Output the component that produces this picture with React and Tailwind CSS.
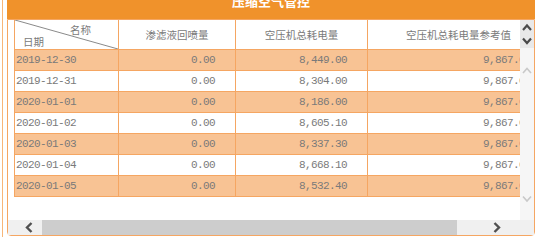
import React from 'react';

const rows = [
    ['2019-12-30', '0.00', '8,449.00', '9,867.00'],
    ['2019-12-31', '0.00', '8,304.00', '9,867.00'],
    ['2020-01-01', '0.00', '8,186.00', '9,867.00'],
    ['2020-01-02', '0.00', '8,605.10', '9,867.00'],
    ['2020-01-03', '0.00', '8,337.30', '9,867.00'],
    ['2020-01-04', '0.00', '8,668.10', '9,867.00'],
    ['2020-01-05', '0.00', '8,532.40', '9,867.00'],
];

function Chevron({ dir, className, strokeWidth = 2 }) {
    const pts = {
        up: '1,7 5,2.5 9,7',
        down: '1,1.5 5,6 9,1.5',
        left: '6.5,1 2,5.5 6.5,10',
        right: '1.5,1 6,5.5 1.5,10',
    }[dir];
    const box = dir === 'up' || dir === 'down' ? '0 0 10 8.5' : '0 0 8 11';
    return (
        <svg viewBox={box} className={className} fill="none" stroke="currentColor" strokeWidth={strokeWidth}>
            <polyline points={pts} />
        </svg>
    );
}

export default function App() {
    return (
        <div className="flex h-[242px] w-[541px] overflow-hidden bg-white">
            <div className="ml-[2px] h-[237px] w-px shrink-0 bg-[#f7b678]" />
            <div className="ml-[4px] flex w-[528px] shrink-0 flex-col">
                {/* title bar, text is cut off at the top */}
                <div className="h-[19px] overflow-hidden bg-[#f0922b] text-center">
                    <div className="-mt-[6px] font-['Noto_Sans_CJK_SC',sans-serif] text-[13px] font-bold leading-[13px] text-white">
                        压缩空气管控
                    </div>
                </div>

                <div className="flex w-[528px] flex-col rounded-b-[4px] border border-[#f5a662]">
                    <div className="flex h-[200px] w-[526px]">
                        <div className="w-[512px] shrink-0 overflow-hidden pl-[6px]">
                            <div className="w-[536px] border-l border-[#f5a662] text-[#7a7a7a]">
                                {/* header */}
                                <div className="flex h-[30px] border-b border-[#f5a662] bg-white font-['Noto_Sans_CJK_SC',sans-serif] text-[10.5px]">
                                    <div className="relative flex w-[104px] shrink-0 flex-col border-r border-[#f5a662] pt-[4px] leading-[12px]">
                                        <svg className="absolute inset-0 h-full w-full" preserveAspectRatio="none" viewBox="0 0 100 100">
                                            <line x1="0" y1="0" x2="100" y2="100" stroke="#8a8a8a" strokeWidth="1" vectorEffect="non-scaling-stroke" />
                                        </svg>
                                        <span className="pr-[27px] text-right">名称</span>
                                        <span className="pl-[8px]">日期</span>
                                    </div>
                                    <div className="flex w-[117px] shrink-0 items-center justify-center border-r border-[#f5a662]">渗滤液回喷量</div>
                                    <div className="flex w-[132px] shrink-0 items-center justify-center border-r border-[#f5a662]">空压机总耗电量</div>
                                    <div className="flex w-[182px] shrink-0 items-center justify-center border-r border-[#f5a662]">空压机总耗电量参考值</div>
                                </div>
                                {/* body */}
                                {rows.map((r, i) => (
                                    <div
                                        key={r[0]}
                                        className={`flex h-[21px] border-b border-[#f5a662] font-['Liberation_Mono',monospace] text-[11px] leading-[20px] tracking-[-0.6px] ${i % 2 === 0 ? 'bg-[#f8c394]' : 'bg-white'}`}
                                    >
                                        <div className="w-[104px] shrink-0 border-r border-[#f5a662] pl-[1px]">{r[0]}</div>
                                        <div className="w-[117px] shrink-0 border-r border-[#f5a662] pr-[20px] text-right">{r[1]}</div>
                                        <div className="w-[132px] shrink-0 border-r border-[#f5a662] pr-[20px] text-right">{r[2]}</div>
                                        <div className="w-[182px] shrink-0 border-r border-[#f5a662] pr-[18px] text-right">{r[3]}</div>
                                    </div>
                                ))}
                            </div>
                        </div>

                        {/* vertical scrollbar */}
                        <div className="flex w-[14px] shrink-0 flex-col">
                            <div className="flex h-[28px] flex-col items-center gap-[5px] bg-[#e9e9e9] pt-[3px] text-[#4a4a4a]">
                                <Chevron dir="up" className="h-[8.5px] w-[10px]" strokeWidth={2.2} />
                                <Chevron dir="down" className="h-[8.5px] w-[10px]" strokeWidth={2.2} />
                            </div>
                            <div className="flex flex-1 flex-col items-center justify-between bg-[#f6f6f6] pt-[18px] pb-[17px] text-[#c9c9c9]">
                                <Chevron dir="up" className="h-[8.5px] w-[10px]" strokeWidth={1.6} />
                                <Chevron dir="down" className="h-[8.5px] w-[10px]" strokeWidth={1.6} />
                            </div>
                        </div>
                    </div>

                    {/* horizontal scrollbar */}
                    <div className="flex h-[15px] bg-[#f0f0f0] text-[#505050]">
                        <div className="flex w-[34px] shrink-0 items-center pl-[17px]">
                            <Chevron dir="left" className="h-[11px] w-[8px]" strokeWidth={2.4} />
                        </div>
                        <div className="w-[415px] shrink-0 bg-[#cdcdcd]" />
                        <div className="flex flex-1 items-center pl-[36px]">
                            <Chevron dir="right" className="h-[11px] w-[8px]" strokeWidth={2.4} />
                        </div>
                    </div>
                </div>
            </div>
        </div>
    );
}
